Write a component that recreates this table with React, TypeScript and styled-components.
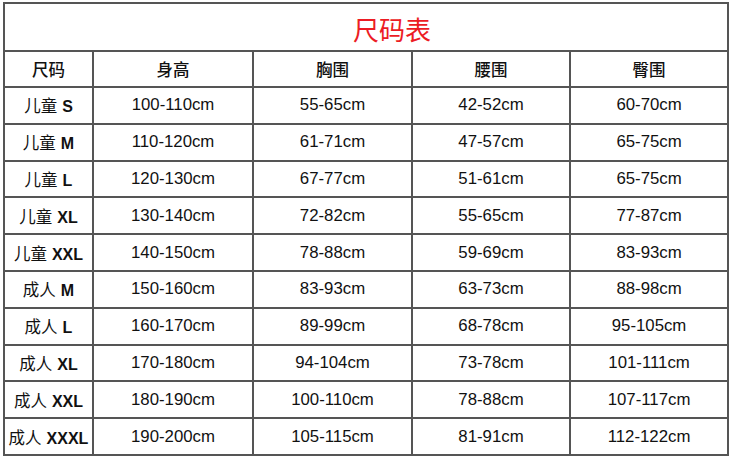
import React from "react";
import styled, { createGlobalStyle } from "styled-components";

const GlobalStyle = createGlobalStyle`
    html, body {
        margin: 0;
        padding: 0;
        background: #ffffff;
    }
`;

type Row = {
    group: string;
    size: string;
    height: string;
    chest: string;
    waist: string;
    hip: string;
};

const rows: Row[] = [
    { group: "儿童", size: "S", height: "100-110cm", chest: "55-65cm", waist: "42-52cm", hip: "60-70cm" },
    { group: "儿童", size: "M", height: "110-120cm", chest: "61-71cm", waist: "47-57cm", hip: "65-75cm" },
    { group: "儿童", size: "L", height: "120-130cm", chest: "67-77cm", waist: "51-61cm", hip: "65-75cm" },
    { group: "儿童", size: "XL", height: "130-140cm", chest: "72-82cm", waist: "55-65cm", hip: "77-87cm" },
    { group: "儿童", size: "XXL", height: "140-150cm", chest: "78-88cm", waist: "59-69cm", hip: "83-93cm" },
    { group: "成人", size: "M", height: "150-160cm", chest: "83-93cm", waist: "63-73cm", hip: "88-98cm" },
    { group: "成人", size: "L", height: "160-170cm", chest: "89-99cm", waist: "68-78cm", hip: "95-105cm" },
    { group: "成人", size: "XL", height: "170-180cm", chest: "94-104cm", waist: "73-78cm", hip: "101-111cm" },
    { group: "成人", size: "XXL", height: "180-190cm", chest: "100-110cm", waist: "78-88cm", hip: "107-117cm" },
    { group: "成人", size: "XXXL", height: "190-200cm", chest: "105-115cm", waist: "81-91cm", hip: "112-122cm" },
];

const headers = ["尺码", "身高", "胸围", "腰围", "臀围"];
const colWidths = [89, 160, 159, 158, 158];

export default function App() {
    return (
        <>
            <GlobalStyle />
            <Page>
                <SizeTable>
                    <colgroup>
                        {colWidths.map((w, i) => (
                            <col key={i} style={{ width: w }} />
                        ))}
                    </colgroup>
                    <tbody>
                        <TitleRow>
                            <TitleCell colSpan={5}>尺码表</TitleCell>
                        </TitleRow>
                        <HeadRow>
                            {headers.map((h) => (
                                <HeadCell key={h}>{h}</HeadCell>
                            ))}
                        </HeadRow>
                        {rows.map((r, i) => (
                            <BodyRow key={i}>
                                <LabelCell>
                                    {r.group}
                                    <SizeMark>{r.size}</SizeMark>
                                </LabelCell>
                                <Cell>{r.height}</Cell>
                                <Cell>{r.chest}</Cell>
                                <Cell>{r.waist}</Cell>
                                <Cell>{r.hip}</Cell>
                            </BodyRow>
                        ))}
                    </tbody>
                </SizeTable>
            </Page>
        </>
    );
}

const Page = styled.div`
    width: 730px;
    height: 456px;
    padding: 2px 0 0 3px;
    box-sizing: border-box;
    background: #ffffff;
`;

const SizeTable = styled.table`
    width: 724px;
    table-layout: fixed;
    border-collapse: collapse;
    border: 2px solid #555555;

    td {
        border: 2px solid #555555;
        padding: 0;
        text-align: center;
        vertical-align: middle;
        color: #111111;
    }
`;

const TitleRow = styled.tr`
    height: 48px;
`;

const HeadRow = styled.tr`
    height: 36px;
`;

const BodyRow = styled.tr`
    height: 36.8px;
`;

const TitleCell = styled.td`
    && {
        color: #ec1c24;
        padding-left: 52px;
        padding-top: 2px;
    }
    font-family: "Noto Sans CJK SC", sans-serif;
    font-size: 26px;
`;

const HeadCell = styled.td`
    font-family: "Noto Sans CJK SC", sans-serif;
    font-size: 16.5px;
    font-weight: 500;
`;

const LabelCell = styled.td`
    font-family: "Noto Sans CJK SC", sans-serif;
    font-size: 16.5px;
    white-space: nowrap;
`;

const SizeMark = styled.span`
    font-family: "Liberation Sans", Arial, sans-serif;
    font-weight: bold;
    font-size: 16px;
    margin-left: 5px;
`;

const Cell = styled.td`
    font-family: "Liberation Sans", Arial, sans-serif;
    font-size: 16.8px;
`;
